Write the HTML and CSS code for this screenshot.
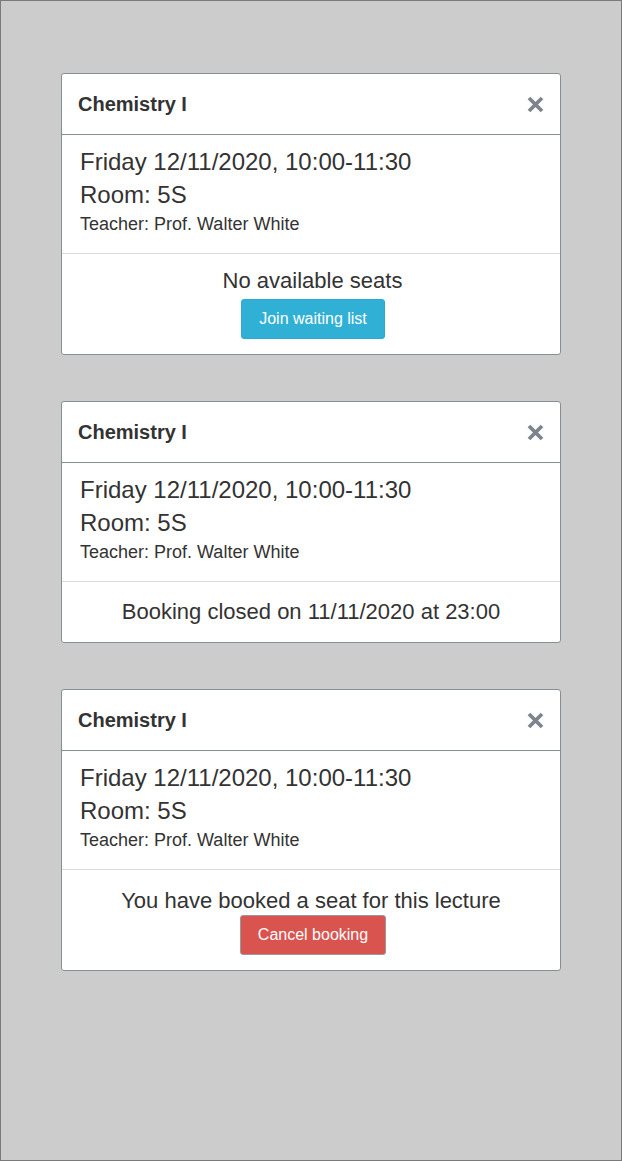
FILE: index.html
```html
<!DOCTYPE html>
<html>
<head>
<meta charset="utf-8">
<link rel="stylesheet" href="styles.css">
</head>
<body>
<div class="frame">
  <div class="card">
    <div class="card-header">
      <span class="title">Chemistry I</span>
      <svg class="close" width="17" height="17" viewBox="0 0 17 17"><path d="M2 2 L15 15 M15 2 L2 15" stroke="#7d858c" stroke-width="3.8" stroke-linecap="butt"/></svg>
    </div>
    <div class="card-body">
      <div class="big">Friday 12/11/2020, 10:00-11:30</div>
      <div class="big">Room: 5S</div>
      <div class="small">Teacher: Prof. Walter White</div>
    </div>
    <div class="card-footer">
      <div class="status shifted">No available seats</div>
      <button class="btn btn-info">Join waiting list</button>
    </div>
  </div>

  <div class="card">
    <div class="card-header">
      <span class="title">Chemistry I</span>
      <svg class="close" width="17" height="17" viewBox="0 0 17 17"><path d="M2 2 L15 15 M15 2 L2 15" stroke="#7d858c" stroke-width="3.8" stroke-linecap="butt"/></svg>
    </div>
    <div class="card-body">
      <div class="big">Friday 12/11/2020, 10:00-11:30</div>
      <div class="big">Room: 5S</div>
      <div class="small">Teacher: Prof. Walter White</div>
    </div>
    <div class="card-footer only">
      <div class="status">Booking closed on 11/11/2020 at 23:00</div>
    </div>
  </div>

  <div class="card">
    <div class="card-header">
      <span class="title">Chemistry I</span>
      <svg class="close" width="17" height="17" viewBox="0 0 17 17"><path d="M2 2 L15 15 M15 2 L2 15" stroke="#7d858c" stroke-width="3.8" stroke-linecap="butt"/></svg>
    </div>
    <div class="card-body">
      <div class="big">Friday 12/11/2020, 10:00-11:30</div>
      <div class="big">Room: 5S</div>
      <div class="small">Teacher: Prof. Walter White</div>
    </div>
    <div class="card-footer booked">
      <div class="status">You have booked a seat for this lecture</div>
      <button class="btn btn-danger">Cancel booking</button>
    </div>
  </div>
</div>
</body>
</html>
```

FILE: styles.css
```css
html, body {
  margin: 0;
  padding: 0;
}
body {
  font-family: "Liberation Sans", Arial, sans-serif;
  color: #333;
}
.frame {
  box-sizing: border-box;
  width: 622px;
  height: 1161px;
  background: #cccccc;
  border: 1px solid #7a7a7a;
  padding-top: 72px;
  display: flex;
  flex-direction: column;
  align-items: center;
  gap: 46px;
}
.card {
  width: 500px;
  box-sizing: border-box;
  background: #fff;
  border: 1px solid #868e96;
  border-radius: 3px;
}
.card-header {
  height: 61px;
  box-sizing: border-box;
  padding: 0 16px;
  display: flex;
  align-items: center;
  justify-content: space-between;
  border-bottom: 1px solid #868e96;
}
.title {
  font-size: 20px;
  font-weight: bold;
  color: #333;
}
.close {
  display: block;
}
.card-body {
  padding: 10px 18px 16px;
  border-bottom: 1px solid #dddddd;
}
.big {
  font-size: 24px;
  line-height: 33px;
}
.small {
  font-size: 18px;
  line-height: 26px;
}
.card-footer {
  padding: 13px 16px 15px;
  display: flex;
  flex-direction: column;
  align-items: center;
}
.card-footer.only {
  padding: 16px 16px 16px;
}
.card-footer.booked {
  padding-top: 17px;
}
.card-footer.booked .btn {
  margin-top: 0;
}
.status {
  font-size: 22px;
  line-height: 28px;
}
.status.shifted {
  padding-left: 3px;
}
.btn {
  margin-top: 4px;
  margin-left: 4px;
  height: 40px;
  padding: 0 17px;
  font-family: "Liberation Sans", Arial, sans-serif;
  font-size: 16px;
  color: #fff;
  border-radius: 3px;
  cursor: pointer;
}
.btn-info {
  background: #31b0d5;
  border: 1px solid #2aabd2;
}
.btn-danger {
  background: #d9534f;
  border: 1px solid #999;
}
```
